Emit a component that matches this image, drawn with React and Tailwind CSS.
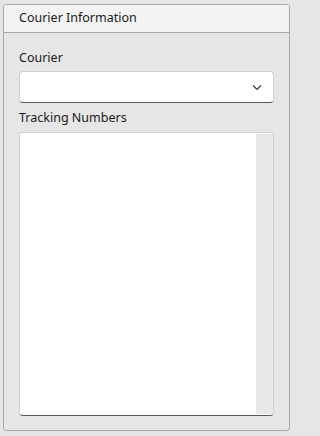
export default function App() {
  return (
    <div
      className="w-full min-h-screen bg-[#e6e6e6] text-[#1b1b1b]"
      style={{ fontFamily: '"Noto Sans", "Open Sans", sans-serif' }}
    >
      <div className="w-[293px] h-[436px] pt-[4px] pl-[3px]">
        <div className="w-[287px] h-[427px] border border-[#a8a8a8] rounded-[3px] flex flex-col overflow-hidden">
          {/* Header */}
          <div className="h-[28px] shrink-0 bg-[#f3f3f3] border-b border-[#a8a8a8] pl-[15px] flex items-center text-[12.5px]">
            Courier Information
          </div>

          {/* Body */}
          <div className="flex-1 flex flex-col px-[15px] pt-[16px] pb-[14px]">
            <div className="text-[12.5px] leading-[18px]">Courier</div>
            <div className="mt-[4px] h-[32px] bg-white border border-[#d0d0d0] border-b-[#5a5a5a] rounded-[4px] flex items-center justify-end pr-[10px]">
              <svg width="12" height="12" viewBox="0 0 12 12" fill="none">
                <path d="M2 4.5 L6 8.5 L10 4.5" stroke="#333" strokeWidth="1.1" />
              </svg>
            </div>

            <div className="mt-[6px] text-[12.5px] leading-[18px]">Tracking Numbers</div>
            <div className="mt-[5px] flex-1 bg-white border border-[#d0d0d0] border-b-[#5a5a5a] rounded-[4px] flex justify-end pt-[1px] pb-[1px]">
              <div className="w-[17px] bg-[#e8e8e8]" />
            </div>
          </div>
        </div>
      </div>
    </div>
  );
}
